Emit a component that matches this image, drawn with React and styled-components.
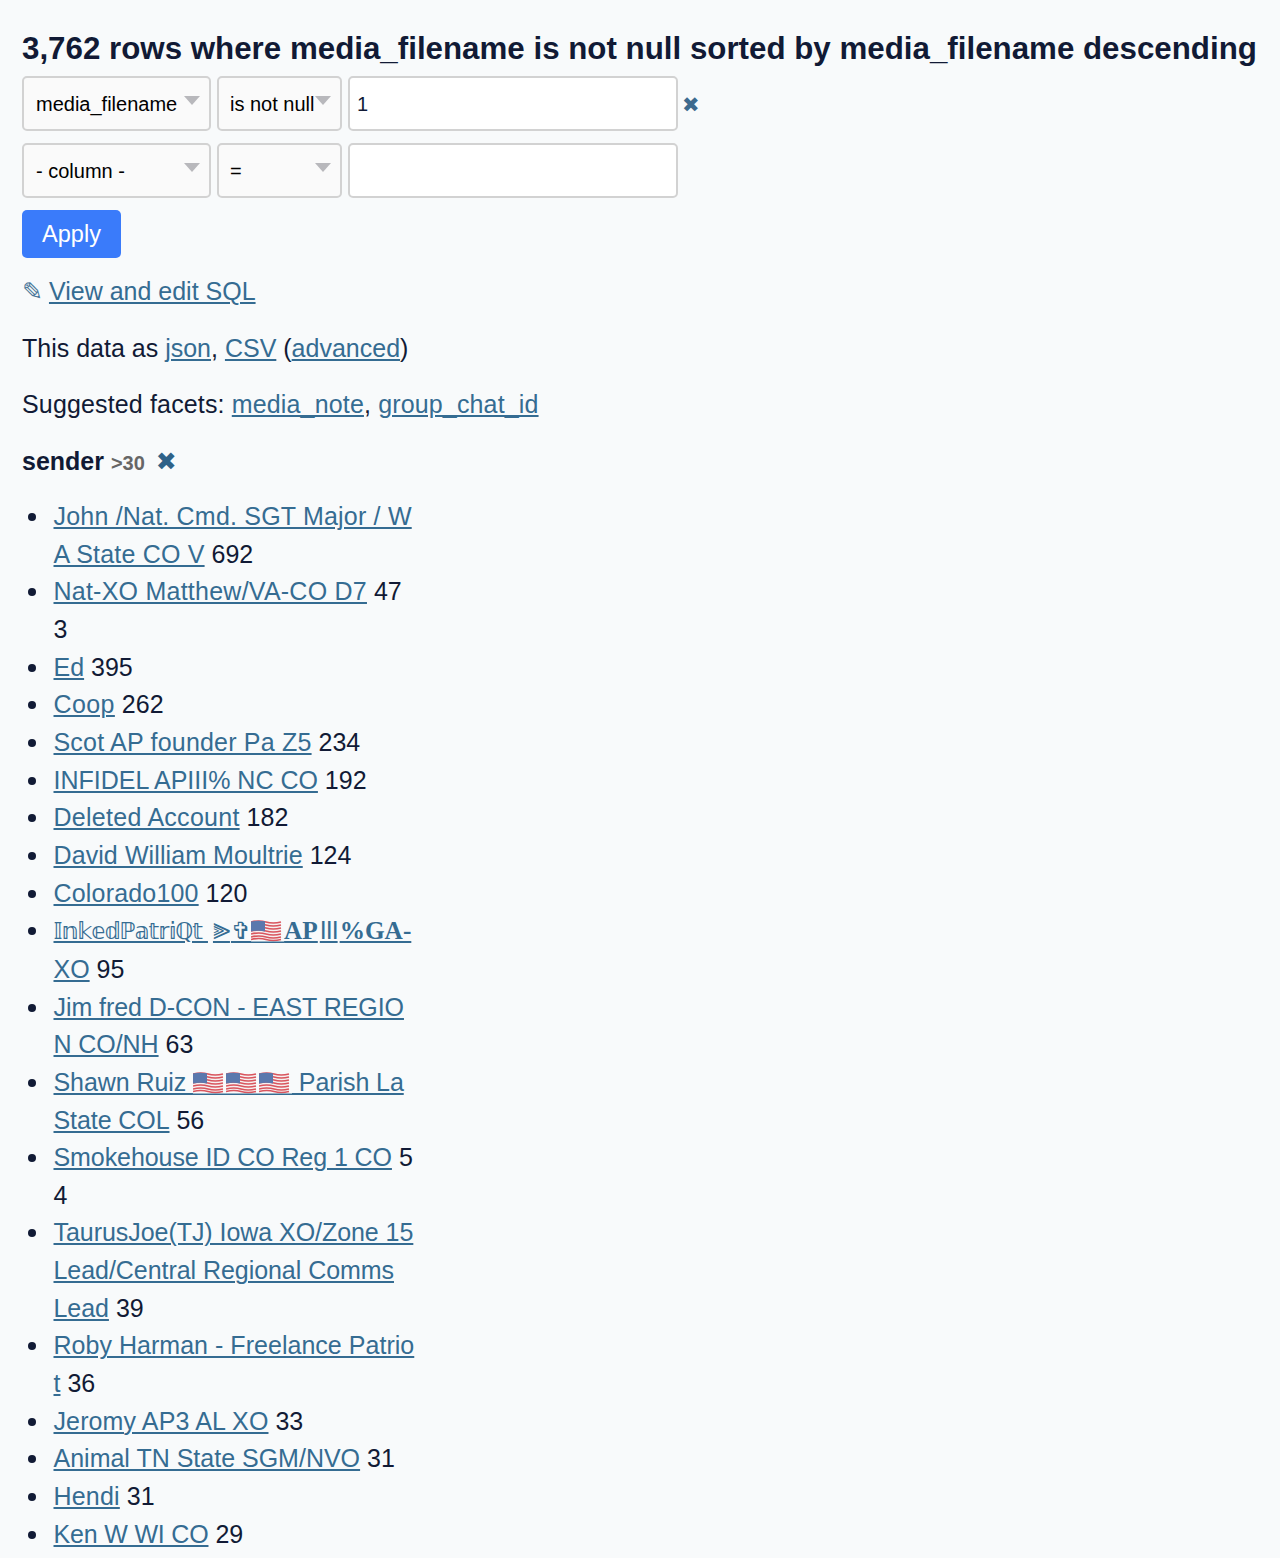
import React from "react";
import styled, { createGlobalStyle } from "styled-components";

const GlobalStyle = createGlobalStyle`
  html, body {
    margin: 0;
    padding: 0;
    background: #f8fafb;
    color: #111a35;
    font-family: "Liberation Sans", Arial, sans-serif;
    font-size: 25px;
    line-height: 37.7px;
  }
`;

const Page = styled.div`
  padding: 30px 22px 0;
  height: 1528px;
  overflow: hidden;
`;

const Title = styled.h1`
  margin: 0 0 8px;
  font-size: 31.3px;
  line-height: 38px;
  font-weight: 700;
  white-space: nowrap;
`;

const FilterRow = styled.div`
  display: flex;
  align-items: center;
  gap: 6px;
  margin-bottom: 12px;
`;

const SelectBox = styled.div`
  position: relative;
  width: ${(p) => p.$width}px;
  height: 55px;
  box-sizing: border-box;
  border: 2px solid #d2d2d2;
  border-radius: 5px;
  background: #fafafa;
  display: flex;
  align-items: center;
  padding: 2px 0 0 ${(p) => p.$pad}px;
  font-size: 20px;
  color: #000;

  &::after {
    content: "";
    position: absolute;
    top: 18px;
    right: 9px;
    border-left: 8px solid transparent;
    border-right: 8px solid transparent;
    border-top: 9px solid #b8b8bc;
  }
`;

const TextInput = styled.div`
  width: 330px;
  height: 55px;
  box-sizing: border-box;
  border: 2px solid #d2d2d2;
  border-radius: 5px;
  background: #fff;
  display: flex;
  align-items: center;
  padding: 2px 0 0 7px;
  font-size: 20px;
`;

const RemoveFilter = styled.a`
  font-family: "DejaVu Sans", sans-serif;
  font-size: 21px;
  line-height: 1;
  color: #3d6a8e;
  margin: 3px 0 0 -2px;
`;

const ApplyButton = styled.button`
  display: block;
  width: 99px;
  height: 48px;
  padding: 1px 0 0;
  border: none;
  border-radius: 5px;
  background: #3a7bfa;
  color: #fff;
  font-family: inherit;
  font-size: 23.5px;
  margin-bottom: 15px;
`;

const Para = styled.p`
  margin: 0 0 18.8px;
  white-space: nowrap;
  letter-spacing: ${(p) => p.$track || 0}px;
`;

const Link = styled.a`
  color: #356c92;
  text-decoration: underline;
  text-underline-offset: 2px;
  text-decoration-thickness: 1.5px;
  letter-spacing: ${(p) => p.$track || 0}px;
`;

const Pencil = styled.span`
  font-family: "DejaVu Sans", sans-serif;
  font-size: 25px;
  line-height: 1;
  color: #4a7699;
  margin-right: 6px;
`;

const Small = styled.span`
  font-size: 20px;
  font-weight: 700;
  color: #666;
`;

const Cross = styled.a`
  font-family: "DejaVu Sans", sans-serif;
  font-size: 25px;
  line-height: 1;
  color: #2f6288;
  margin-left: 4px;
`;

const FacetList = styled.ul`
  margin: -3px 0 0;
  padding: 0 0 0 31.5px;
  width: 361px;
  line-height: 37.65px;
  list-style: none;
  word-break: break-all;
`;

const FacetItem = styled.li`
  position: relative;

  &::before {
    content: "";
    position: absolute;
    left: -26px;
    top: 15px;
    width: 8px;
    height: 8px;
    border-radius: 50%;
    background: #111a35;
  }
`;

const Fancy = styled.span`
  font-family: "DejaVu Sans", sans-serif;
  font-size: 23px;
  letter-spacing: -1.1px;
`;

const Chevrons = styled.span`
  font-family: "DejaVu Sans", "Noto Sans", sans-serif;
  font-size: 31px;
  line-height: 1;
  margin-left: 5px;
`;

const Dagger = styled.span`
  font-family: "DejaVu Sans", sans-serif;
  font-size: 24px;
  line-height: 1;
  margin-left: 1px;
`;

const Serif = styled.span`
  font-family: "Liberation Serif", serif;
  font-weight: 700;
  font-size: 25.3px;
  line-height: 1;
`;

const Thin = styled.span`
  letter-spacing: -1px;
  margin: 0 2px;
`;

const FlagIcon = styled.svg`
  display: inline-block;
  width: 33px;
  height: 28px;
  vertical-align: -6px;
`;

// flag emoji with the link underline running below it
const Flag = () => (
  <FlagIcon viewBox="0 0 33 28">
    <g transform="translate(0 2.5)">
      <path d="M0 2 Q8 0 15 2 T30 2 V20 Q23 22 15 20 T0 20 Z" fill="#f6f0f0" />
      {[2.5, 5.5, 8.5, 11.5, 14.5, 17.5, 20].map((y) => (
        <path key={y} d={`M0 ${y} Q8 ${y - 2} 15 ${y} T30 ${y}`} stroke="#d9555e" strokeWidth="1.6" fill="none" />
      ))}
      <path d="M0 2 Q6 0.8 14 1.8 V12 Q7 10.5 0 12 Z" fill="#5a78ad" />
    </g>
    <rect x="0" y="24.5" width="33" height="1.5" fill="#356c92" />
  </FlagIcon>
);

const facets = [
  { name: "John /Nat. Cmd. SGT Major / WA State CO V", count: 692, track: 0.2 },
  { name: "Nat-XO Matthew/VA-CO D7", count: 473, track: 0.24 },
  { name: "Ed", count: 395 },
  { name: "Coop", count: 262, track: 0.4 },
  { name: "Scot AP founder Pa Z5", count: 234, track: 0.2 },
  { name: "INFIDEL APIII% NC CO", count: 192 },
  { name: "Deleted Account", count: 182, track: 0.27 },
  { name: "David William Moultrie", count: 124, track: 0.09 },
  { name: "Colorado100", count: 120, track: 0.18 },
  {
    name: (
      <>
        <Fancy>𝕀𝕟𝕜𝕖𝕕ℙ𝕒𝕥𝕣𝕚ℚ𝕥 </Fancy>
        <Chevrons>⫸</Chevrons>
        <Dagger>✞</Dagger>
        <Flag />
        <Serif>AP</Serif>
        <Thin>III</Thin>
        <Serif>%GA-</Serif>
        <br />
        XO
      </>
    ),
    count: 95,
  },
  { name: "Jim fred D-CON - EAST REGION CO/NH", count: 63, track: -0.07 },
  {
    name: (
      <>
        Shawn Ruiz <Flag />
        <Flag />
        <Flag /> Parish La State COL
      </>
    ),
    count: 56,
    track: -0.08,
  },
  { name: "Smokehouse ID CO Reg 1 CO", count: 54, track: -0.08 },
  {
    name: (
      <>
        TaurusJoe(TJ) Iowa XO/Zone 15 Lead/Central Regional Comms
        <br />
        Lead
      </>
    ),
    count: 39,
    track: -0.05,
  },
  { name: "Roby Harman - Freelance Patriot", count: 36, track: 0.03 },
  { name: "Jeromy AP3 AL XO", count: 33, track: 0.12 },
  { name: "Animal TN State SGM/NVO", count: 31 },
  { name: "Hendi", count: 31, track: 0.2 },
  { name: "Ken W WI CO", count: 29, track: -0.18 },
];

const Filter = ({ column, op, value, removable }) => (
  <FilterRow>
    <SelectBox $width={189} $pad={12}>{column}</SelectBox>
    <SelectBox $width={125} $pad={11}>{op}</SelectBox>
    <TextInput>{value}</TextInput>
    {removable && <RemoveFilter>✖</RemoveFilter>}
  </FilterRow>
);

export default function App() {
  return (
    <Page>
      <GlobalStyle />
      <Title>3,762 rows where media_filename is not null sorted by media_filename descending</Title>
      <Filter column="media_filename" op="is not null" value="1" removable />
      <Filter column="- column -" op="=" />
      <ApplyButton>Apply</ApplyButton>
      <Para>
        <Pencil>✎</Pencil>
        <Link href="#">View and edit SQL</Link>
      </Para>
      <Para>
        This data as <Link href="#">json</Link>, <Link href="#">CSV</Link> (<Link href="#">advanced</Link>)
      </Para>
      <Para $track={0.15}>
        Suggested facets: <Link href="#" $track={0.15}>media_note</Link>, <Link href="#" $track={0.15}>group_chat_id</Link>
      </Para>
      <Para>
        <strong>sender</strong> <Small>&gt;30</Small> <Cross>✖</Cross>
      </Para>
      <FacetList>
        {facets.map((facet, i) => (
          <FacetItem key={i}>
            <Link href="#" $track={facet.track}>{facet.name}</Link> {facet.count}
          </FacetItem>
        ))}
      </FacetList>
    </Page>
  );
}
